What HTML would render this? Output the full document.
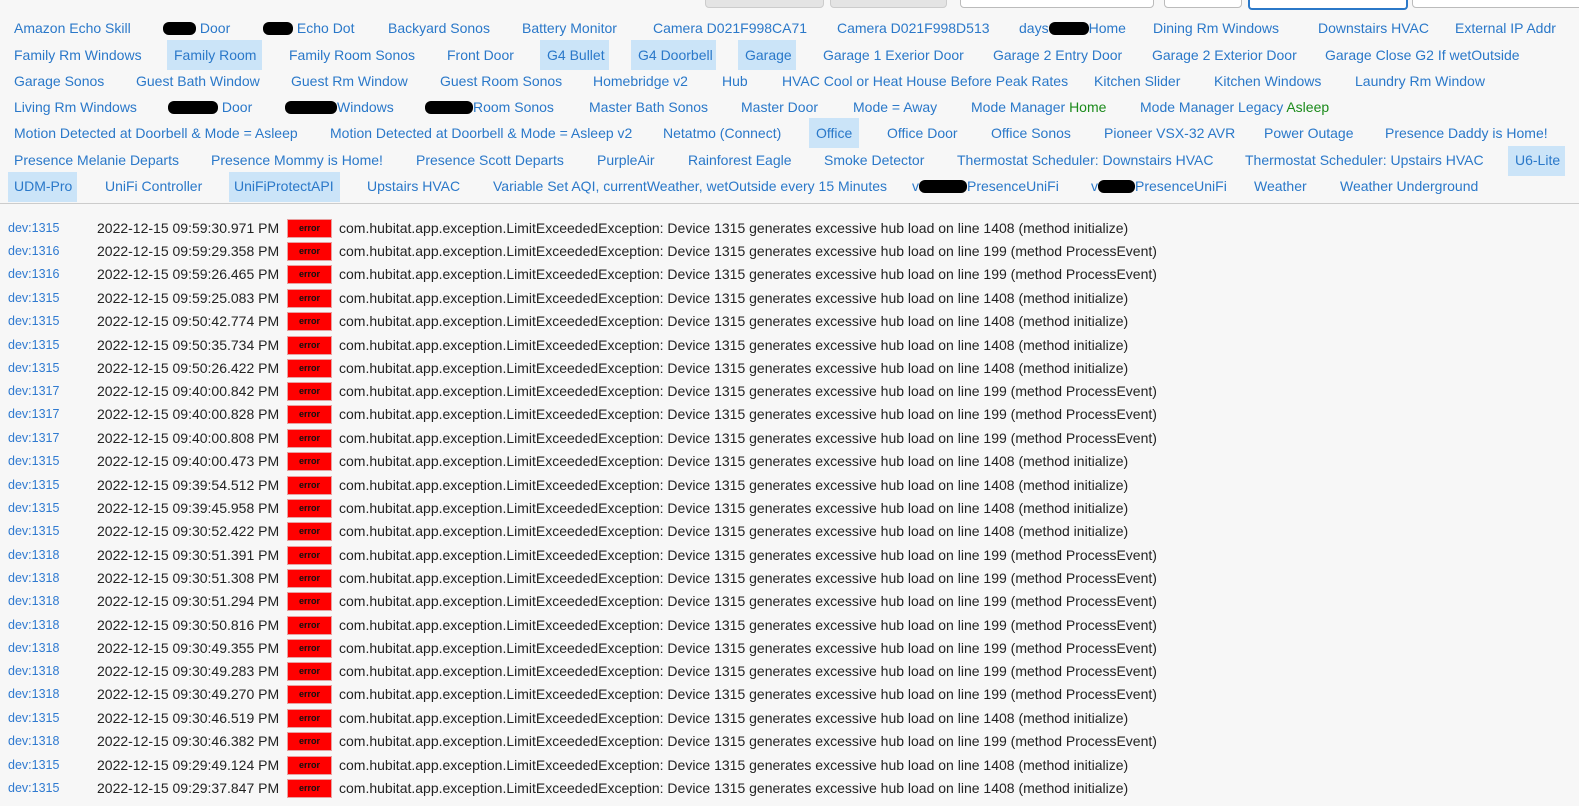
<!DOCTYPE html>
<html><head><meta charset="utf-8"><style>
body{margin:0;width:1579px;height:806px;background:#f7f7f7;font-family:"Liberation Sans",sans-serif;overflow:hidden;position:relative}
.t{position:absolute;font-size:14px;color:#2a78c9;line-height:20px;white-space:nowrap}
.h{position:absolute;background:#cbe4f8;height:30px}
.b{display:inline-block;background:#000;height:13px;border-radius:6px;vertical-align:-2px}
.g{color:#1a8a1a}
.btn{position:absolute;top:-4px;height:10px;border-radius:4px}
.r{position:absolute;left:0;width:1579px;height:20px;line-height:20px;font-size:14px;color:#222}
.r .d{position:absolute;left:8px;font-size:12.5px;color:#2f7ad0}
.r .ts{position:absolute;left:97px}
.r .e{position:absolute;left:287px;top:1px;width:43px;height:17px;background:#f00;border:1px solid #e8a0a0;font-size:9px;line-height:17px;text-align:center;color:#111;font-weight:bold}
.r .m{position:absolute;left:339px}
.line{position:absolute;left:0;top:203px;width:1579px;height:1px;background:#ccc}
</style></head><body>
<div class="btn" style="left:705px;width:117px;background:#e4e4e4;border:1px solid #ccc"></div>
<div class="btn" style="left:830px;width:115px;background:#e4e4e4;border:1px solid #ccc"></div>
<div class="btn" style="left:960px;width:192px;background:#fff;border:1px solid #bbb"></div>
<div class="btn" style="left:1164px;width:76px;background:#fff;border:1px solid #bbb"></div>
<div class="btn" style="left:1248px;width:156px;background:#fff;border:2px solid #2b78c8"></div>
<div class="btn" style="left:1412px;width:170px;background:#fff;border:1px solid #bbb"></div>

<div class="h" style="left:167px;top:40px;width:95px"></div>
<div class="h" style="left:540px;top:40px;width:69px"></div>
<div class="h" style="left:631px;top:40px;width:85px"></div>
<div class="h" style="left:738px;top:40px;width:58px"></div>
<div class="h" style="left:809px;top:118px;width:50px"></div>
<div class="h" style="left:1508px;top:146px;width:57px"></div>
<div class="h" style="left:8px;top:172px;width:69px"></div>
<div class="h" style="left:229px;top:172px;width:111px"></div>

<div class="t" style="left:14px;top:18px">Amazon Echo Skill</div>
<div class="t" style="left:163px;top:18px"><span class="b" style="width:33px"></span> Door</div>
<div class="t" style="left:263px;top:18px"><span class="b" style="width:30px"></span> Echo Dot</div>
<div class="t" style="left:388px;top:18px">Backyard Sonos</div>
<div class="t" style="left:522px;top:18px">Battery Monitor</div>
<div class="t" style="left:653px;top:18px">Camera D021F998CA71</div>
<div class="t" style="left:837px;top:18px">Camera D021F998D513</div>
<div class="t" style="left:1019px;top:18px">days<span class="b" style="width:40px"></span>Home</div>
<div class="t" style="left:1153px;top:18px">Dining Rm Windows</div>
<div class="t" style="left:1318px;top:18px">Downstairs HVAC</div>
<div class="t" style="left:1455px;top:18px">External IP Addr</div>

<div class="t" style="left:14px;top:45px">Family Rm Windows</div>
<div class="t" style="left:174px;top:45px">Family Room</div>
<div class="t" style="left:289px;top:45px">Family Room Sonos</div>
<div class="t" style="left:447px;top:45px">Front Door</div>
<div class="t" style="left:547px;top:45px">G4 Bullet</div>
<div class="t" style="left:638px;top:45px">G4 Doorbell</div>
<div class="t" style="left:745px;top:45px">Garage</div>
<div class="t" style="left:823px;top:45px">Garage 1 Exerior Door</div>
<div class="t" style="left:993px;top:45px">Garage 2 Entry Door</div>
<div class="t" style="left:1152px;top:45px">Garage 2 Exterior Door</div>
<div class="t" style="left:1325px;top:45px">Garage Close G2 If wetOutside</div>

<div class="t" style="left:14px;top:71px">Garage Sonos</div>
<div class="t" style="left:136px;top:71px">Guest Bath Window</div>
<div class="t" style="left:291px;top:71px">Guest Rm Window</div>
<div class="t" style="left:440px;top:71px">Guest Room Sonos</div>
<div class="t" style="left:593px;top:71px">Homebridge v2</div>
<div class="t" style="left:722px;top:71px">Hub</div>
<div class="t" style="left:782px;top:71px">HVAC Cool or Heat House Before Peak Rates</div>
<div class="t" style="left:1094px;top:71px">Kitchen Slider</div>
<div class="t" style="left:1214px;top:71px">Kitchen Windows</div>
<div class="t" style="left:1355px;top:71px">Laundry Rm Window</div>

<div class="t" style="left:14px;top:97px">Living Rm Windows</div>
<div class="t" style="left:168px;top:97px"><span class="b" style="width:50px"></span> Door</div>
<div class="t" style="left:285px;top:97px"><span class="b" style="width:52px"></span>Windows</div>
<div class="t" style="left:425px;top:97px"><span class="b" style="width:48px"></span>Room Sonos</div>
<div class="t" style="left:589px;top:97px">Master Bath Sonos</div>
<div class="t" style="left:741px;top:97px">Master Door</div>
<div class="t" style="left:853px;top:97px">Mode = Away</div>
<div class="t" style="left:971px;top:97px">Mode Manager <span class="g">Home</span></div>
<div class="t" style="left:1140px;top:97px">Mode Manager Legacy <span class="g">Asleep</span></div>

<div class="t" style="left:14px;top:123px">Motion Detected at Doorbell &amp; Mode = Asleep</div>
<div class="t" style="left:330px;top:123px">Motion Detected at Doorbell &amp; Mode = Asleep v2</div>
<div class="t" style="left:663px;top:123px">Netatmo (Connect)</div>
<div class="t" style="left:816px;top:123px">Office</div>
<div class="t" style="left:887px;top:123px">Office Door</div>
<div class="t" style="left:991px;top:123px">Office Sonos</div>
<div class="t" style="left:1104px;top:123px">Pioneer VSX-32 AVR</div>
<div class="t" style="left:1264px;top:123px">Power Outage</div>
<div class="t" style="left:1385px;top:123px">Presence Daddy is Home!</div>

<div class="t" style="left:14px;top:150px">Presence Melanie Departs</div>
<div class="t" style="left:211px;top:150px">Presence Mommy is Home!</div>
<div class="t" style="left:416px;top:150px">Presence Scott Departs</div>
<div class="t" style="left:597px;top:150px">PurpleAir</div>
<div class="t" style="left:688px;top:150px">Rainforest Eagle</div>
<div class="t" style="left:824px;top:150px">Smoke Detector</div>
<div class="t" style="left:957px;top:150px">Thermostat Scheduler: Downstairs HVAC</div>
<div class="t" style="left:1245px;top:150px">Thermostat Scheduler: Upstairs HVAC</div>
<div class="t" style="left:1515px;top:150px">U6-Lite</div>

<div class="t" style="left:14px;top:176px">UDM-Pro</div>
<div class="t" style="left:105px;top:176px">UniFi Controller</div>
<div class="t" style="left:234px;top:176px">UniFiProtectAPI</div>
<div class="t" style="left:367px;top:176px">Upstairs HVAC</div>
<div class="t" style="left:493px;top:176px">Variable Set AQI, currentWeather, wetOutside every 15 Minutes</div>
<div class="t" style="left:912px;top:176px">v<span class="b" style="width:48px"></span>PresenceUniFi</div>
<div class="t" style="left:1091px;top:176px">v<span class="b" style="width:37px"></span>PresenceUniFi</div>
<div class="t" style="left:1254px;top:176px">Weather</div>
<div class="t" style="left:1340px;top:176px">Weather Underground</div>
<div class="line"></div>

<div class="r" style="top:218px"><span class="d">dev:1315</span><span class="ts">2022-12-15 09:59:30.971 PM</span><span class="e">error</span><span class="m">com.hubitat.app.exception.LimitExceededException: Device 1315 generates excessive hub load on line 1408 (method initialize)</span></div>
<div class="r" style="top:241px"><span class="d">dev:1316</span><span class="ts">2022-12-15 09:59:29.358 PM</span><span class="e">error</span><span class="m">com.hubitat.app.exception.LimitExceededException: Device 1315 generates excessive hub load on line 199 (method ProcessEvent)</span></div>
<div class="r" style="top:264px"><span class="d">dev:1316</span><span class="ts">2022-12-15 09:59:26.465 PM</span><span class="e">error</span><span class="m">com.hubitat.app.exception.LimitExceededException: Device 1315 generates excessive hub load on line 199 (method ProcessEvent)</span></div>
<div class="r" style="top:288px"><span class="d">dev:1315</span><span class="ts">2022-12-15 09:59:25.083 PM</span><span class="e">error</span><span class="m">com.hubitat.app.exception.LimitExceededException: Device 1315 generates excessive hub load on line 1408 (method initialize)</span></div>
<div class="r" style="top:311px"><span class="d">dev:1315</span><span class="ts">2022-12-15 09:50:42.774 PM</span><span class="e">error</span><span class="m">com.hubitat.app.exception.LimitExceededException: Device 1315 generates excessive hub load on line 1408 (method initialize)</span></div>
<div class="r" style="top:335px"><span class="d">dev:1315</span><span class="ts">2022-12-15 09:50:35.734 PM</span><span class="e">error</span><span class="m">com.hubitat.app.exception.LimitExceededException: Device 1315 generates excessive hub load on line 1408 (method initialize)</span></div>
<div class="r" style="top:358px"><span class="d">dev:1315</span><span class="ts">2022-12-15 09:50:26.422 PM</span><span class="e">error</span><span class="m">com.hubitat.app.exception.LimitExceededException: Device 1315 generates excessive hub load on line 1408 (method initialize)</span></div>
<div class="r" style="top:381px"><span class="d">dev:1317</span><span class="ts">2022-12-15 09:40:00.842 PM</span><span class="e">error</span><span class="m">com.hubitat.app.exception.LimitExceededException: Device 1315 generates excessive hub load on line 199 (method ProcessEvent)</span></div>
<div class="r" style="top:404px"><span class="d">dev:1317</span><span class="ts">2022-12-15 09:40:00.828 PM</span><span class="e">error</span><span class="m">com.hubitat.app.exception.LimitExceededException: Device 1315 generates excessive hub load on line 199 (method ProcessEvent)</span></div>
<div class="r" style="top:428px"><span class="d">dev:1317</span><span class="ts">2022-12-15 09:40:00.808 PM</span><span class="e">error</span><span class="m">com.hubitat.app.exception.LimitExceededException: Device 1315 generates excessive hub load on line 199 (method ProcessEvent)</span></div>
<div class="r" style="top:451px"><span class="d">dev:1315</span><span class="ts">2022-12-15 09:40:00.473 PM</span><span class="e">error</span><span class="m">com.hubitat.app.exception.LimitExceededException: Device 1315 generates excessive hub load on line 1408 (method initialize)</span></div>
<div class="r" style="top:475px"><span class="d">dev:1315</span><span class="ts">2022-12-15 09:39:54.512 PM</span><span class="e">error</span><span class="m">com.hubitat.app.exception.LimitExceededException: Device 1315 generates excessive hub load on line 1408 (method initialize)</span></div>
<div class="r" style="top:498px"><span class="d">dev:1315</span><span class="ts">2022-12-15 09:39:45.958 PM</span><span class="e">error</span><span class="m">com.hubitat.app.exception.LimitExceededException: Device 1315 generates excessive hub load on line 1408 (method initialize)</span></div>
<div class="r" style="top:521px"><span class="d">dev:1315</span><span class="ts">2022-12-15 09:30:52.422 PM</span><span class="e">error</span><span class="m">com.hubitat.app.exception.LimitExceededException: Device 1315 generates excessive hub load on line 1408 (method initialize)</span></div>
<div class="r" style="top:545px"><span class="d">dev:1318</span><span class="ts">2022-12-15 09:30:51.391 PM</span><span class="e">error</span><span class="m">com.hubitat.app.exception.LimitExceededException: Device 1315 generates excessive hub load on line 199 (method ProcessEvent)</span></div>
<div class="r" style="top:568px"><span class="d">dev:1318</span><span class="ts">2022-12-15 09:30:51.308 PM</span><span class="e">error</span><span class="m">com.hubitat.app.exception.LimitExceededException: Device 1315 generates excessive hub load on line 199 (method ProcessEvent)</span></div>
<div class="r" style="top:591px"><span class="d">dev:1318</span><span class="ts">2022-12-15 09:30:51.294 PM</span><span class="e">error</span><span class="m">com.hubitat.app.exception.LimitExceededException: Device 1315 generates excessive hub load on line 199 (method ProcessEvent)</span></div>
<div class="r" style="top:615px"><span class="d">dev:1318</span><span class="ts">2022-12-15 09:30:50.816 PM</span><span class="e">error</span><span class="m">com.hubitat.app.exception.LimitExceededException: Device 1315 generates excessive hub load on line 199 (method ProcessEvent)</span></div>
<div class="r" style="top:638px"><span class="d">dev:1318</span><span class="ts">2022-12-15 09:30:49.355 PM</span><span class="e">error</span><span class="m">com.hubitat.app.exception.LimitExceededException: Device 1315 generates excessive hub load on line 199 (method ProcessEvent)</span></div>
<div class="r" style="top:661px"><span class="d">dev:1318</span><span class="ts">2022-12-15 09:30:49.283 PM</span><span class="e">error</span><span class="m">com.hubitat.app.exception.LimitExceededException: Device 1315 generates excessive hub load on line 199 (method ProcessEvent)</span></div>
<div class="r" style="top:684px"><span class="d">dev:1318</span><span class="ts">2022-12-15 09:30:49.270 PM</span><span class="e">error</span><span class="m">com.hubitat.app.exception.LimitExceededException: Device 1315 generates excessive hub load on line 199 (method ProcessEvent)</span></div>
<div class="r" style="top:708px"><span class="d">dev:1315</span><span class="ts">2022-12-15 09:30:46.519 PM</span><span class="e">error</span><span class="m">com.hubitat.app.exception.LimitExceededException: Device 1315 generates excessive hub load on line 1408 (method initialize)</span></div>
<div class="r" style="top:731px"><span class="d">dev:1318</span><span class="ts">2022-12-15 09:30:46.382 PM</span><span class="e">error</span><span class="m">com.hubitat.app.exception.LimitExceededException: Device 1315 generates excessive hub load on line 199 (method ProcessEvent)</span></div>
<div class="r" style="top:755px"><span class="d">dev:1315</span><span class="ts">2022-12-15 09:29:49.124 PM</span><span class="e">error</span><span class="m">com.hubitat.app.exception.LimitExceededException: Device 1315 generates excessive hub load on line 1408 (method initialize)</span></div>
<div class="r" style="top:778px"><span class="d">dev:1315</span><span class="ts">2022-12-15 09:29:37.847 PM</span><span class="e">error</span><span class="m">com.hubitat.app.exception.LimitExceededException: Device 1315 generates excessive hub load on line 1408 (method initialize)</span></div>
</body></html>
